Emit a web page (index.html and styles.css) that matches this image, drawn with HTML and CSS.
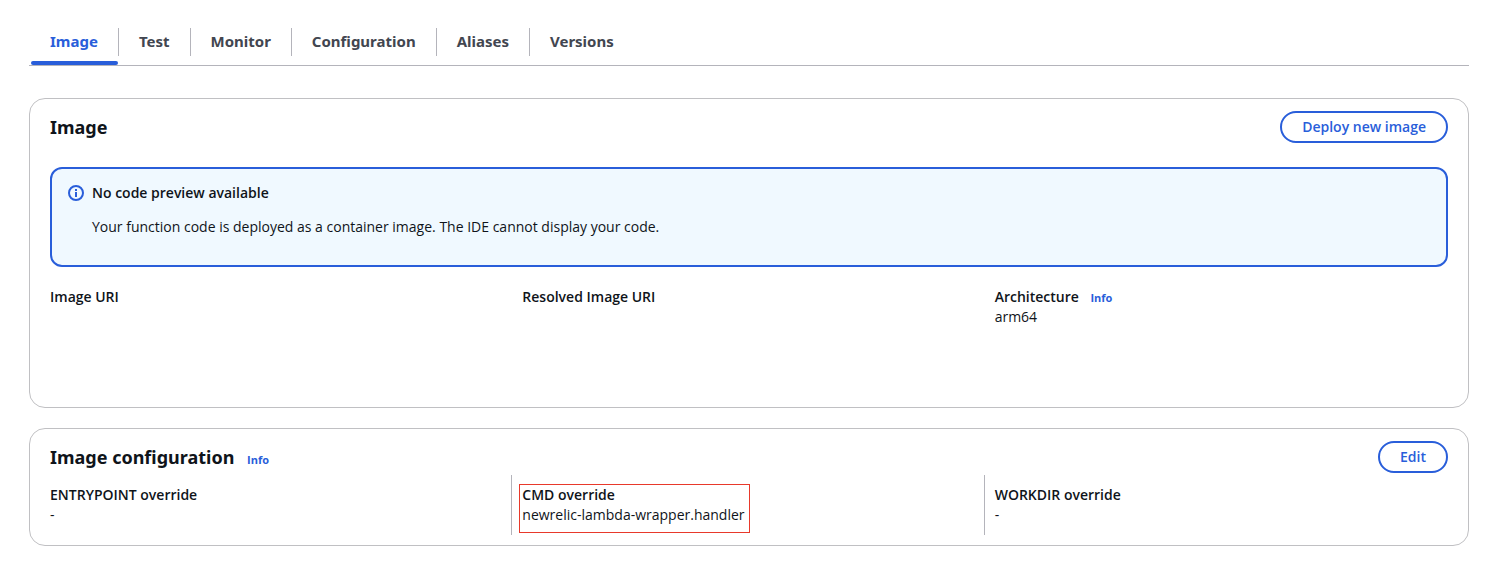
FILE: index.html
```html
<!DOCTYPE html>
<html lang="en">
<head>
<meta charset="utf-8">
<meta name="viewport" content="width=device-width, initial-scale=1">
<title>Function image</title>
<link rel="stylesheet" href="styles.css">
</head>
<body>
<nav class="tabs" aria-label="Function sections">
  <a class="tab tab-active" href="#image" aria-current="page">Image</a>
  <a class="tab" href="#test">Test</a>
  <a class="tab" href="#monitor">Monitor</a>
  <a class="tab" href="#configuration">Configuration</a>
  <a class="tab" href="#aliases">Aliases</a>
  <a class="tab" href="#versions">Versions</a>
</nav>
<main class="panels">
  <section class="card card-image" id="image">
    <header class="card-header">
      <h2 class="card-title">Image</h2>
      <button class="button" type="button">Deploy new image</button>
    </header>
    <div class="alert">
      <svg class="alert-icon" viewBox="0 0 16 16" aria-hidden="true">
        <circle cx="8" cy="8" r="7" fill="none" stroke="currentColor" stroke-width="2"/>
        <path d="M7 4h2v2H7zM7 7h2v5H7z" fill="currentColor"/>
      </svg>
      <div>
        <h3 class="alert-title">No code preview available</h3>
        <p class="alert-text">Your function code is deployed as a container image. The IDE cannot display your code.</p>
      </div>
    </div>
    <dl class="columns">
      <div class="column"><dt class="label">Image URI</dt></div>
      <div class="column"><dt class="label">Resolved Image URI</dt></div>
      <div class="column"><dt class="label">Architecture <a class="info" href="#architecture-info">Info</a></dt><dd class="value">arm64</dd></div>
    </dl>
  </section>
  <section class="card">
    <header class="card-header">
      <h2 class="card-title">Image configuration <a class="info" href="#configuration-info">Info</a></h2>
      <button class="button" type="button">Edit</button>
    </header>
    <dl class="columns columns-divided">
      <div class="column"><dt class="label">ENTRYPOINT override</dt><dd class="value">-</dd></div>
      <div class="column marked"><dt class="label">CMD override</dt><dd class="value"><span class="marked-value">newrelic-lambda-wrapper.handler</span></dd></div>
      <div class="column"><dt class="label">WORKDIR override</dt><dd class="value">-</dd></div>
    </dl>
  </section>
</main>
</body>
</html>
```
FILE: styles.css
```css
* {
  box-sizing: border-box;
}

body {
  margin: 0;
  padding: 19px 35px 19px 29px;
  background: #fff;
  color: #0f141a;
  font: 14px/20px "Open Sans", "Noto Sans", sans-serif;
}

h2, h3, p, dl, dd {
  margin: 0;
}

a {
  text-decoration: none;
}

.tabs {
  display: flex;
  border-bottom: 1px solid #b4b4bb;
}

.tab {
  position: relative;
  padding: 12px 20px 14px 21px;
  color: #424650;
  font-family: "Noto Sans", sans-serif;
  font-size: 15px;
  font-weight: 700;
  line-height: 20px;
}

.tab:not(:last-child)::after {
  content: "";
  position: absolute;
  top: 9px;
  right: -1px;
  width: 1px;
  height: 28px;
  background: #b4b4bb;
}

.tab-active {
  color: #295eda;
}

.tab-active::before {
  content: "";
  position: absolute;
  right: 0;
  bottom: 0;
  left: 2px;
  height: 4px;
  border-radius: 2px;
  background: #295eda;
}

.panels {
  display: grid;
  gap: 20px;
  margin-top: 32px;
}

.card {
  padding: 12px 20px 10px;
  border: 1px solid #c0c0c3;
  border-radius: 16px;
}

.card-image {
  min-height: 310px;
}

.card-header {
  display: flex;
  align-items: center;
  justify-content: space-between;
}

.card-title {
  font-family: "Noto Sans", sans-serif;
  font-size: 18px;
  line-height: 24px;
}

.button {
  height: 32px;
  padding: 0 20px;
  border: 2px solid #295eda;
  border-radius: 16px;
  background: #fff;
  color: #295eda;
  font: inherit;
  font-weight: 600;
}

.info {
  margin-left: 8px;
  color: #295eda;
  font-family: "Open Sans", sans-serif;
  font-size: 11px;
  font-weight: 700;
  line-height: 16px;
}

.alert {
  display: flex;
  gap: 8px;
  min-height: 100px;
  margin: 24px 0 20px;
  padding: 14px 16px;
  border: 2px solid #295eda;
  border-radius: 12px;
  background: #f0f9ff;
}

.alert-icon {
  flex: none;
  width: 16px;
  height: 16px;
  margin-top: 2px;
  color: #295eda;
}

.alert-title {
  font-size: 14px;
  font-weight: 600;
  line-height: 20px;
}

.alert-text {
  margin-top: 14px;
}

.columns {
  display: grid;
  grid-template-columns: repeat(3, 1fr);
  gap: 19px;
}

.label {
  font-weight: 600;
}

.columns-divided {
  margin-top: 2px;
}

.columns-divided .column {
  min-height: 60px;
  padding: 10px 0;
}

.columns-divided .column + .column {
  margin-left: -11px;
  padding-left: 10px;
  border-left: 1px solid #b4b4bb;
}

/* Red outline drawn over the label and value of the highlighted field */
.marked-value {
  position: relative;
  display: inline-block;
}

.marked-value::after {
  content: "";
  position: absolute;
  inset: -21px -5px -8px -3px;
  border: 1px solid #e8392b;
}
```
